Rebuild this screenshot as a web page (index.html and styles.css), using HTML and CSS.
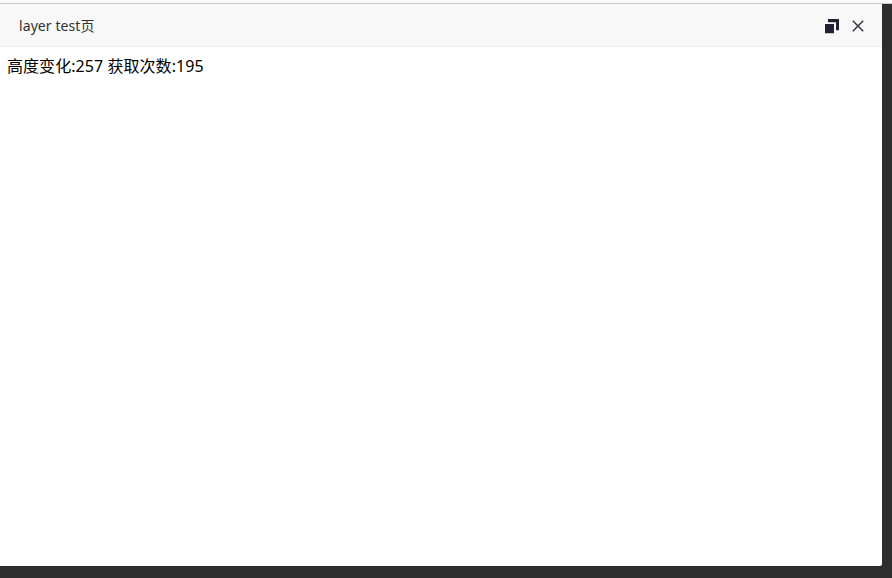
FILE: index.html
```html
<!DOCTYPE html>
<html lang="zh-CN">
<head>
  <meta charset="utf-8">
  <title>layer test页</title>
  <link rel="stylesheet" href="styles.css">
</head>
<body>
  <div class="topbar"></div>
  <div class="shade">
    <div class="layer">
      <div class="layer-title">
        <span class="title-text">layer test页</span>
        <div class="layer-setwin">
          <svg class="icon-restore" width="15" height="16" viewBox="0 0 15 16">
            <path fill="#c4c4c8" d="M3 3h8v1H3zM0 14h9v1H0zM11 11h3v1h-3z"/>
            <path fill="#222032" d="M3 0h11v11h-3V3H3zM0 5h9v9H0z"/>
          </svg>
          <svg class="icon-close" width="12" height="12" viewBox="0 0 12 12">
            <path fill="none" stroke="#2e2d3c" stroke-width="1.4" d="M.8.8l10.4 10.4M11.2.8L.8 11.2"/>
          </svg>
        </div>
      </div>
      <div class="layer-content">高度变化:257 获取次数:195</div>
    </div>
  </div>
</body>
</html>
```

FILE: styles.css
```css
html, body { height: 100%; }
body {
  margin: 0;
  display: flex;
  flex-direction: column;
  overflow: hidden;
  font-family: "Noto Sans", "Noto Sans CJK SC", sans-serif;
}
.topbar {
  flex: none;
  height: 3px;
  background: #f9f9fb;
  border-bottom: 1px solid #ccccd0;
}
.shade {
  flex: 1;
  display: flex;
  box-sizing: border-box;
  padding: 0 10px 12px 0;
  background: #2d2d2d;
}
.layer {
  flex: 1;
  background: #fff;
  border-radius: 0 0 2px 0;
  overflow: hidden;
}
.layer-title {
  display: flex;
  align-items: center;
  justify-content: space-between;
  height: 42px;
  padding: 0 18px 0 19px;
  border-bottom: 1px solid #eee;
  background: #f8f8f8;
  color: #333;
  font-size: 14px;
}
.title-text { letter-spacing: .08px; }
.layer-setwin { display: flex; align-items: center; gap: 12px; padding-top: 2px; }
.icon-restore, .icon-close { display: block; }
.icon-restore { margin-top: 2px; }
.layer-content {
  padding: 7px;
  font-size: 16px;
  line-height: 24px;
  letter-spacing: .06px;
  color: #000;
}
```
